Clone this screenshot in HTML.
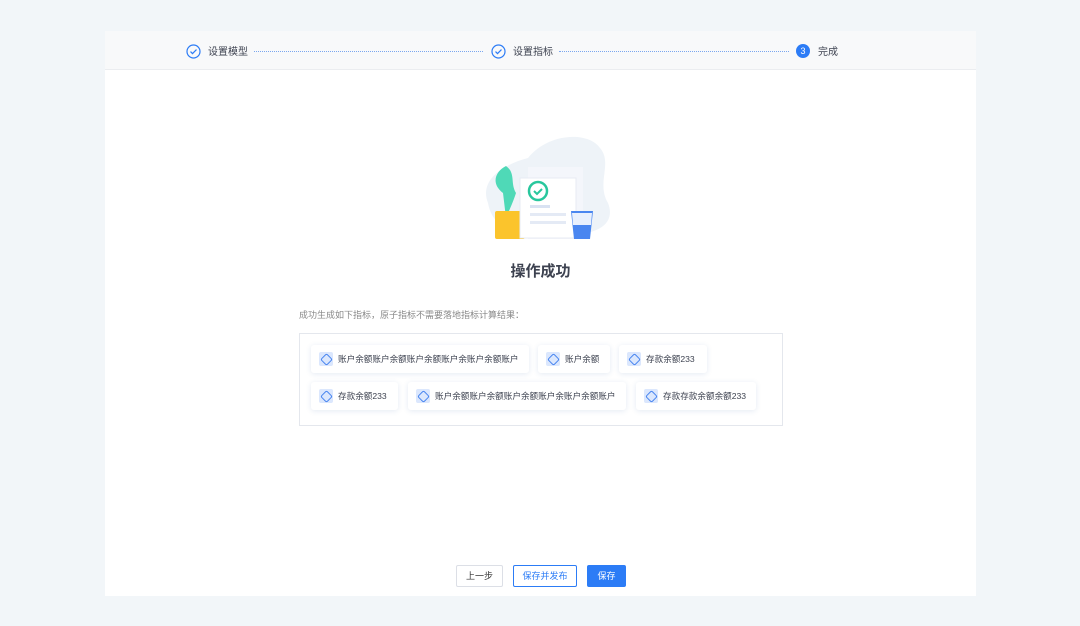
<!DOCTYPE html><html><head><meta charset="utf-8"><style>
*{margin:0;padding:0;box-sizing:border-box}
body{width:1080px;height:626px;background:#f2f6f9;font-family:"Liberation Sans","Noto Sans CJK SC",sans-serif;position:relative;overflow:hidden}
.card{position:absolute;left:105px;top:31px;width:871px;height:565px;background:#fff}
.hd{position:absolute;left:0;top:0;width:871px;height:39px;background:#f8f9fa;border-bottom:1px solid #ebedf0}
.ab{position:absolute}
.st{font-size:10px;color:#3d4250;top:15px;line-height:14px}
.ln{height:0;border-top:1px dotted #7aa7ef;top:20px}
.tag{position:absolute;height:28px;background:#fff;border-radius:3px;box-shadow:0 1px 6px rgba(30,80,160,.12);font-size:8.6px;color:#3d4250;line-height:28px;padding-left:27px;white-space:nowrap;overflow:hidden}
.tag i{position:absolute;left:8px;top:7px;width:14px;height:14px;background:#dbe7fd;border-radius:2px}
.tag i:after{content:"";position:absolute;left:3px;top:3px;width:7px;height:7px;border:1px solid #4a86f0;border-radius:2px;transform:rotate(45deg)}
.btn{position:absolute;top:534px;height:22px;font-size:9px;line-height:20px;text-align:center;border-radius:2px;border:1px solid #dcdfe6;color:#333;background:#fff}
</style></head><body>
<div class="card">
<div class="hd">
<svg class="ab" style="left:81px;top:13px" width="15" height="15"><circle cx="7.5" cy="7.5" r="6.5" fill="none" stroke="#2c7cf6" stroke-width="1.2"/><path d="M4.5 7.6l2 2 4-4" fill="none" stroke="#2c7cf6" stroke-width="1.2"/></svg>
<div class="ab st" style="left:103px">设置模型</div>
<div class="ab ln" style="left:149px;width:229px"></div>
<svg class="ab" style="left:386px;top:13px" width="15" height="15"><circle cx="7.5" cy="7.5" r="6.5" fill="none" stroke="#2c7cf6" stroke-width="1.2"/><path d="M4.5 7.6l2 2 4-4" fill="none" stroke="#2c7cf6" stroke-width="1.2"/></svg>
<div class="ab st" style="left:408px">设置指标</div>
<div class="ab ln" style="left:454px;width:230px"></div>
<div class="ab" style="left:691px;top:13px;width:14px;height:14px;border-radius:50%;background:#2c7cf6;color:#fff;font-size:9px;line-height:14px;text-align:center">3</div>
<div class="ab st" style="left:713px">完成</div>
</div>
<svg class="ab" style="left:363px;top:102px" width="150" height="110">
<path d="M20 70 C10 45 40 30 60 25 C80 0 120 -2 132 15 C145 30 128 50 140 70 C150 95 120 105 90 100 C60 108 25 100 20 70Z" fill="#eef3f8"/>
<path d="M35 60 C22 50 28 38 38 33 C48 40 42 50 48 60 C44 72 40 80 38 85 Z" fill="#4fd9b7"/>
<rect x="27" y="78" width="30" height="28" rx="2" fill="#fbc42c"/>
<rect x="60" y="34" width="55" height="72" fill="#f4f6fb"/>
<rect x="52" y="45" width="56" height="60" fill="#fff" stroke="#e7ebf3"/>
<circle cx="70" cy="58" r="9" fill="none" stroke="#28c79d" stroke-width="2.5"/>
<path d="M66 58l3 3 5-5" fill="none" stroke="#28c79d" stroke-width="2"/>
<rect x="62" y="72" width="20" height="3" fill="#d9e2f2"/><rect x="62" y="80" width="36" height="3" fill="#e4eaf5"/><rect x="62" y="88" width="36" height="3" fill="#e4eaf5"/>
<path d="M103 78h22l-3 28h-16z" fill="#4a86f0"/><path d="M104 80h20l-1 12h-18z" fill="#e9f0fd"/>
</svg>
<div class="ab" style="left:0;width:871px;top:229px;text-align:center;font-size:15px;font-weight:bold;color:#3d4250">操作成功</div>
<div class="ab" style="left:194px;top:277px;font-size:9px;color:#888">成功生成如下指标，原子指标不需要落地指标计算结果：</div>
<div class="ab" style="left:194px;top:302px;width:484px;height:93px;border:1px solid #e4e7ed"></div>
<div class="tag" style="left:206px;top:314px;width:218px"><i></i>账户余额账户余额账户余额账户余账户余额账户</div>
<div class="tag" style="left:433px;top:314px;width:72px"><i></i>账户余额</div>
<div class="tag" style="left:514px;top:314px;width:88px"><i></i>存款余额233</div>
<div class="tag" style="left:206px;top:351px;width:87px"><i></i>存款余额233</div>
<div class="tag" style="left:303px;top:351px;width:218px"><i></i>账户余额账户余额账户余额账户余账户余额账户</div>
<div class="tag" style="left:531px;top:351px;width:120px"><i></i>存款存款余额余额233</div>
<div class="btn" style="left:351px;width:47px">上一步</div>
<div class="btn" style="left:408px;width:64px;border-color:#2c7cf6;color:#2c7cf6">保存并发布</div>
<div class="btn" style="left:482px;width:39px;border-color:#2c7cf6;background:#2c7cf6;color:#fff">保存</div>
</div>
</body></html>
